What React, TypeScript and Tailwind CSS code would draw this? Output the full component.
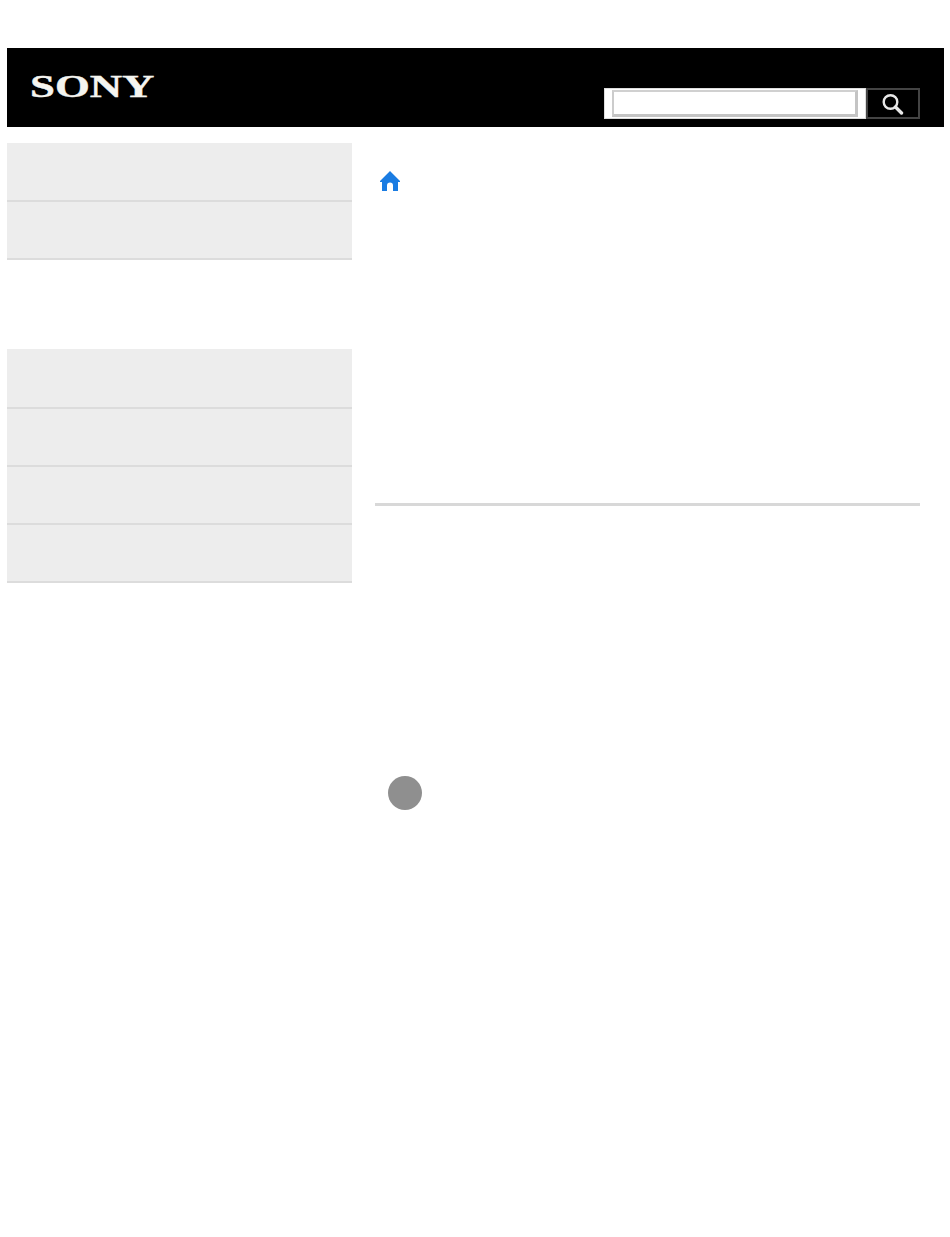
export default function App() {
  const Item = ({ h }: { h: string }) => (
    <div className={`${h} bg-[#ededed] border-b-2 border-[#dcdcdc]`} />
  );
  return (
    <div className="min-h-[1237px] bg-white pt-12 px-[7px] font-['Liberation_Sans',sans-serif]">
      <header className="h-[79px] w-[937px] bg-black flex justify-between">
        <div className="pl-[23px] pt-[25px]">
          <span className="block w-[124px] h-[28px] origin-top-left scale-x-[1.445] font-['Liberation_Serif',serif] font-bold text-[31px] leading-[28px] text-[#f5f5f0] [-webkit-text-stroke:0.4px_#f5f5f0] whitespace-nowrap">
            SONY
          </span>
        </div>
        <div className="flex items-start pt-10 pr-6">
          <div className="w-[262px] h-[31px] bg-white border border-[#dddddd] pl-[7px] pt-[1px]">
            <div className="w-[246px] h-[27px] bg-white border-2 border-r-[3px] border-b-[3px] border-[#c4c4c4] border-t-[#d0d0d0] border-l-[#cccccc]" />
          </div>
          <button className="w-[54px] h-[31px] bg-black border-2 border-[#444444] flex items-center justify-center">
            <svg width="24" height="22" viewBox="0 0 24 22" fill="none">
              <circle cx="9.5" cy="9" r="6.8" stroke="#e8e8e8" strokeWidth="2.4" />
              <path d="M14.5 14l6 6" stroke="#e8e8e8" strokeWidth="3.4" strokeLinecap="round" />
            </svg>
          </button>
        </div>
      </header>
      <div className="flex pt-4">
        <aside className="w-[345px] flex flex-col">
          <Item h="h-[59px]" />
          <Item h="h-[58px]" />
          <div className="h-[89px]" />
          <Item h="h-[60px]" />
          <Item h="h-[58px]" />
          <Item h="h-[58px]" />
          <Item h="h-[58px]" />
        </aside>
        <main className="w-[545px] ml-[23px] flex flex-col">
          <div className="pl-[5px] pt-[28px]">
            <svg width="20" height="20" viewBox="0 0 20 20" className="block" fill="#1a7ce2">
              <path fillRule="evenodd" d="M10 0L20 10V11H18V20H13V14.5A3 3 0 0 0 7 14.5V20H2V11H0V10Z" />
            </svg>
          </div>
          <div className="mt-[312px] h-[3px] bg-[#d8d8d8]" />
          <div className="mt-[270px] ml-[13px] w-[34px] h-[34px] rounded-full bg-[#8f8f8f]" />
        </main>
      </div>
    </div>
  );
}
